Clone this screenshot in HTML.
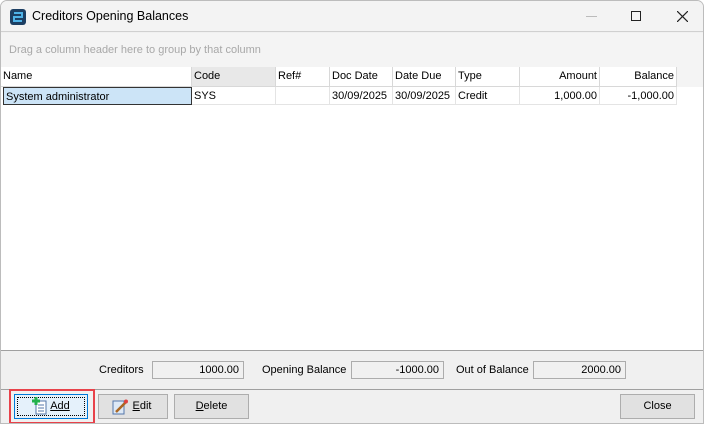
<!DOCTYPE html>
<html><head><style>
*{margin:0;padding:0;box-sizing:border-box}
body{width:705px;height:424px;background:#fff;font-family:"Liberation Sans",Arial,sans-serif;font-size:11px;color:#000;position:relative;overflow:hidden}
.win{position:absolute;left:0;top:0;width:704px;height:424px;background:#f0f0f0;border:1px solid #bcbcbc;border-radius:7px 7px 0 0;overflow:hidden}
.title{position:absolute;left:0;top:0;width:703px;height:31px;background:#f3f3f3;border-bottom:1px solid #d0d0d0}
.a{position:absolute;white-space:nowrap}
.grid{position:absolute;left:0;top:32px;width:702px;height:318px;background:#fff;border-bottom:1px solid #a0a0a0}
.grp{position:absolute;left:0;top:0;width:702px;height:54px;background:#f4f4f4}
.hd{position:absolute;top:34px;height:20px;background:#fff;border-right:1px solid #d8d8d8;border-bottom:1px solid #d8d8d8;padding:3px 2px 0;font-size:11px}
.c{position:absolute;top:54px;height:18px;border-right:1px solid #e4e4e4;border-bottom:1px solid #e4e4e4;padding:3px 2px 0}
.box{position:absolute;height:18px;background:#f0f0f0;border:1px solid #acacac;text-align:right;padding:2px 4px}
.btn{position:absolute;height:25px;background:#e1e1e1;border:1px solid #adadad;text-align:center;line-height:23px;font-size:11px}
</style></head><body>
<div class="win">
<div class="title">
<svg class="a" style="left:8px;top:7px" width="18" height="18" viewBox="0 0 18 18"><rect x="1" y="1" width="16" height="16" rx="3" fill="#1d3f63"/><path d="M5 5h8v4H5v4h8" fill="none" stroke="#4fb3e8" stroke-width="2"/></svg>
<div class="a" style="left:31px;top:8px;font-size:12.5px">Creditors Opening Balances</div>
<div class="a" style="left:585px;top:15px;width:11px;height:1px;background:#bbb"></div>
<div class="a" style="left:630px;top:10px;width:10px;height:10px;border:1px solid #222"></div>
<svg class="a" style="left:676px;top:10px" width="11" height="11"><path d="M0 0L11 11M11 0L0 11" stroke="#222" stroke-width="1.2"/></svg>
</div>
<div class="grid">
<div class="grp"><div class="a" style="left:8px;top:11px;color:#a8a8a8">Drag a column header here to group by that column</div></div>
<div class="hd" style="left:0;width:191px">Name</div>
<div class="hd" style="left:191px;width:84px;background:#e8e8e8">Code</div>
<div class="hd" style="left:275px;width:54px">Ref#</div>
<div class="hd" style="left:329px;width:63px">Doc Date</div>
<div class="hd" style="left:392px;width:63px">Date Due</div>
<div class="hd" style="left:455px;width:64px">Type</div>
<div class="hd" style="left:519px;width:80px;text-align:right">Amount</div>
<div class="hd" style="left:599px;width:77px;text-align:right">Balance</div>
<div class="c" style="left:2px;width:189px;background:#cce4f7;border:1px solid #333">System administrator</div>
<div class="c" style="left:191px;width:84px">SYS</div>
<div class="c" style="left:275px;width:54px"></div>
<div class="c" style="left:329px;width:63px">30/09/2025</div>
<div class="c" style="left:392px;width:63px">30/09/2025</div>
<div class="c" style="left:455px;width:64px">Credit</div>
<div class="c" style="left:519px;width:80px;text-align:right">1,000.00</div>
<div class="c" style="left:599px;width:77px;text-align:right">-1,000.00</div>
</div>
<div class="a" style="left:98px;top:363px">Creditors</div>
<div class="box" style="left:151px;top:360px;width:92px">1000.00</div>
<div class="a" style="left:261px;top:363px">Opening Balance</div>
<div class="box" style="left:350px;top:360px;width:93px">-1000.00</div>
<div class="a" style="left:455px;top:363px">Out of Balance</div>
<div class="box" style="left:532px;top:360px;width:93px">2000.00</div>
<div class="a" style="left:0;top:388px;width:704px;height:1px;background:#a0a0a0"></div>
<div class="a" style="left:8px;top:388px;width:86px;height:35px;border:2px solid #e8424a"></div>
<div class="btn" style="left:13px;top:393px;width:74px;border-color:#0078d7;background:#e5f1fb"><div style="position:absolute;left:2px;top:2px;right:2px;bottom:2px;border:1px dotted #000"></div>
<svg class="a" style="left:16px;top:2px" width="16" height="18"><rect x="5" y="4" width="10" height="13" fill="#fff" stroke="#5577aa"/><path d="M7 8h6M7 11h6M7 14h6" stroke="#5577aa"/><path d="M1 4h8M5 0v8" stroke="#22b14c" stroke-width="3"/></svg>
<span style="position:relative;left:9px;text-decoration:underline">Add</span></div>
<div class="btn" style="left:97px;top:393px;width:70px">
<svg class="a" style="left:13px;top:4px" width="16" height="16"><rect x="1" y="2" width="11" height="13" fill="#dde8f5" stroke="#5577aa"/><path d="M4 13L14 3" stroke="#aa6622" stroke-width="2.5"/><circle cx="14" cy="2.5" r="2" fill="#e04040"/></svg>
<span style="position:relative;left:9px"><u>E</u>dit</span></div>
<div class="btn" style="left:173px;top:393px;width:75px"><u>D</u>elete</div>
<div class="btn" style="left:619px;top:393px;width:75px">Close</div>
</div>
</body></html>
